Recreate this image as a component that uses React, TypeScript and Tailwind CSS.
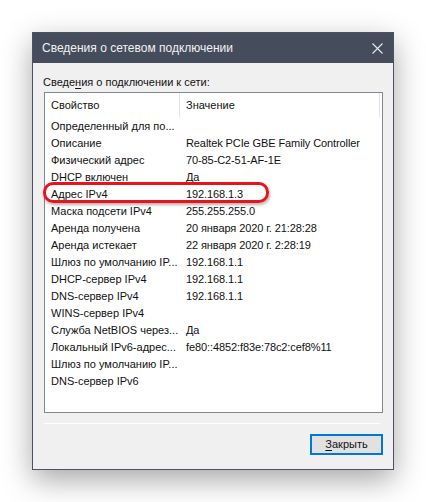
import React from "react";

const rows: [string, string][] = [
  ["Определенный для по...", ""],
  ["Описание", "Realtek PCIe GBE Family Controller"],
  ["Физический адрес", "70-85-C2-51-AF-1E"],
  ["DHCP включен", "Да"],
  ["Адрес IPv4", "192.168.1.3"],
  ["Маска подсети IPv4", "255.255.255.0"],
  ["Аренда получена", "20 января 2020 г. 21:28:28"],
  ["Аренда истекает", "22 января 2020 г. 2:28:19"],
  ["Шлюз по умолчанию IP...", "192.168.1.1"],
  ["DHCP-сервер IPv4", "192.168.1.1"],
  ["DNS-сервер IPv4", "192.168.1.1"],
  ["WINS-сервер IPv4", ""],
  ["Служба NetBIOS через...", "Да"],
  ["Локальный IPv6-адрес...", "fe80::4852:f83e:78c2:cef8%11"],
  ["Шлюз по умолчанию IP...", ""],
  ["DNS-сервер IPv6", ""],
];

export default function App() {
  return (
    <div
      className="relative w-[426px] h-[502px] bg-white pt-[32px] pl-[32px] text-[11px] text-[#111]"
      style={{ fontFamily: '"Liberation Sans", Arial, sans-serif' }}
    >
      <div className="w-[362px] h-[438px] border border-[#4b5263] bg-[#f0f0f0] flex flex-col shadow-[0_10px_28px_rgba(0,0,0,0.35)]">
        <div className="h-[30px] bg-[#454c5c] flex items-center justify-between pl-[9px] pr-[10px] shrink-0">
          <span className="text-[#f2f2f2] text-[12px]">Сведения о сетевом подключении</span>
          <svg width="11" height="11" viewBox="0 0 11 11">
            <path d="M0.5 0.5 L10.5 10.5 M10.5 0.5 L0.5 10.5" stroke="#e8e8e8" strokeWidth="1.1" />
          </svg>
        </div>
        <div className="flex flex-col px-[10px] pt-[11px]">
          <div className="h-[16px] leading-[16px]">
            Сведе<span className="underline underline-offset-2">н</span>ия о подключении к сети:
          </div>
          <div className="mt-[2px] ml-[1px] w-[339px] h-[321px] border border-[#828790] bg-white overflow-hidden flex flex-col">
            <div className="h-[25px] flex items-center shrink-0">
              <div className="w-[135px] h-full flex items-center pl-[6px] border-r border-[#e5e5e5]">Свойство</div>
              <div className="w-[200px] h-full flex items-center pl-[6px] border-r border-[#e5e5e5]">Значение</div>
            </div>
            {rows.map(([k, v], i) => (
              <div key={i} className="h-[17px] flex items-center shrink-0 whitespace-nowrap">
                <div className="w-[135px] shrink-0 pl-[6px]">{k}</div>
                <div className="pl-[6px] tracking-[-0.1px]">{v}</div>
              </div>
            ))}
          </div>
          <div className="mt-[10px] ml-[1px] w-[336px] h-[1px] bg-[#a0a0a0] border-b border-white" />
          <div className="flex justify-end mt-[10px]">
            <div className="w-[73px] h-[21px] border-2 border-[#0078d7] bg-[#e1e1e1] flex items-center justify-center">
              <span>
                <span className="underline underline-offset-2">З</span>акрыть
              </span>
            </div>
          </div>
        </div>
      </div>
      <div className="absolute left-[43px] top-[182px] w-[226px] h-[21px] border-[3px] border-[#e8141c] rounded-[10px] shadow-[1px_2px_3px_rgba(0,0,0,0.3)]" />
    </div>
  );
}
